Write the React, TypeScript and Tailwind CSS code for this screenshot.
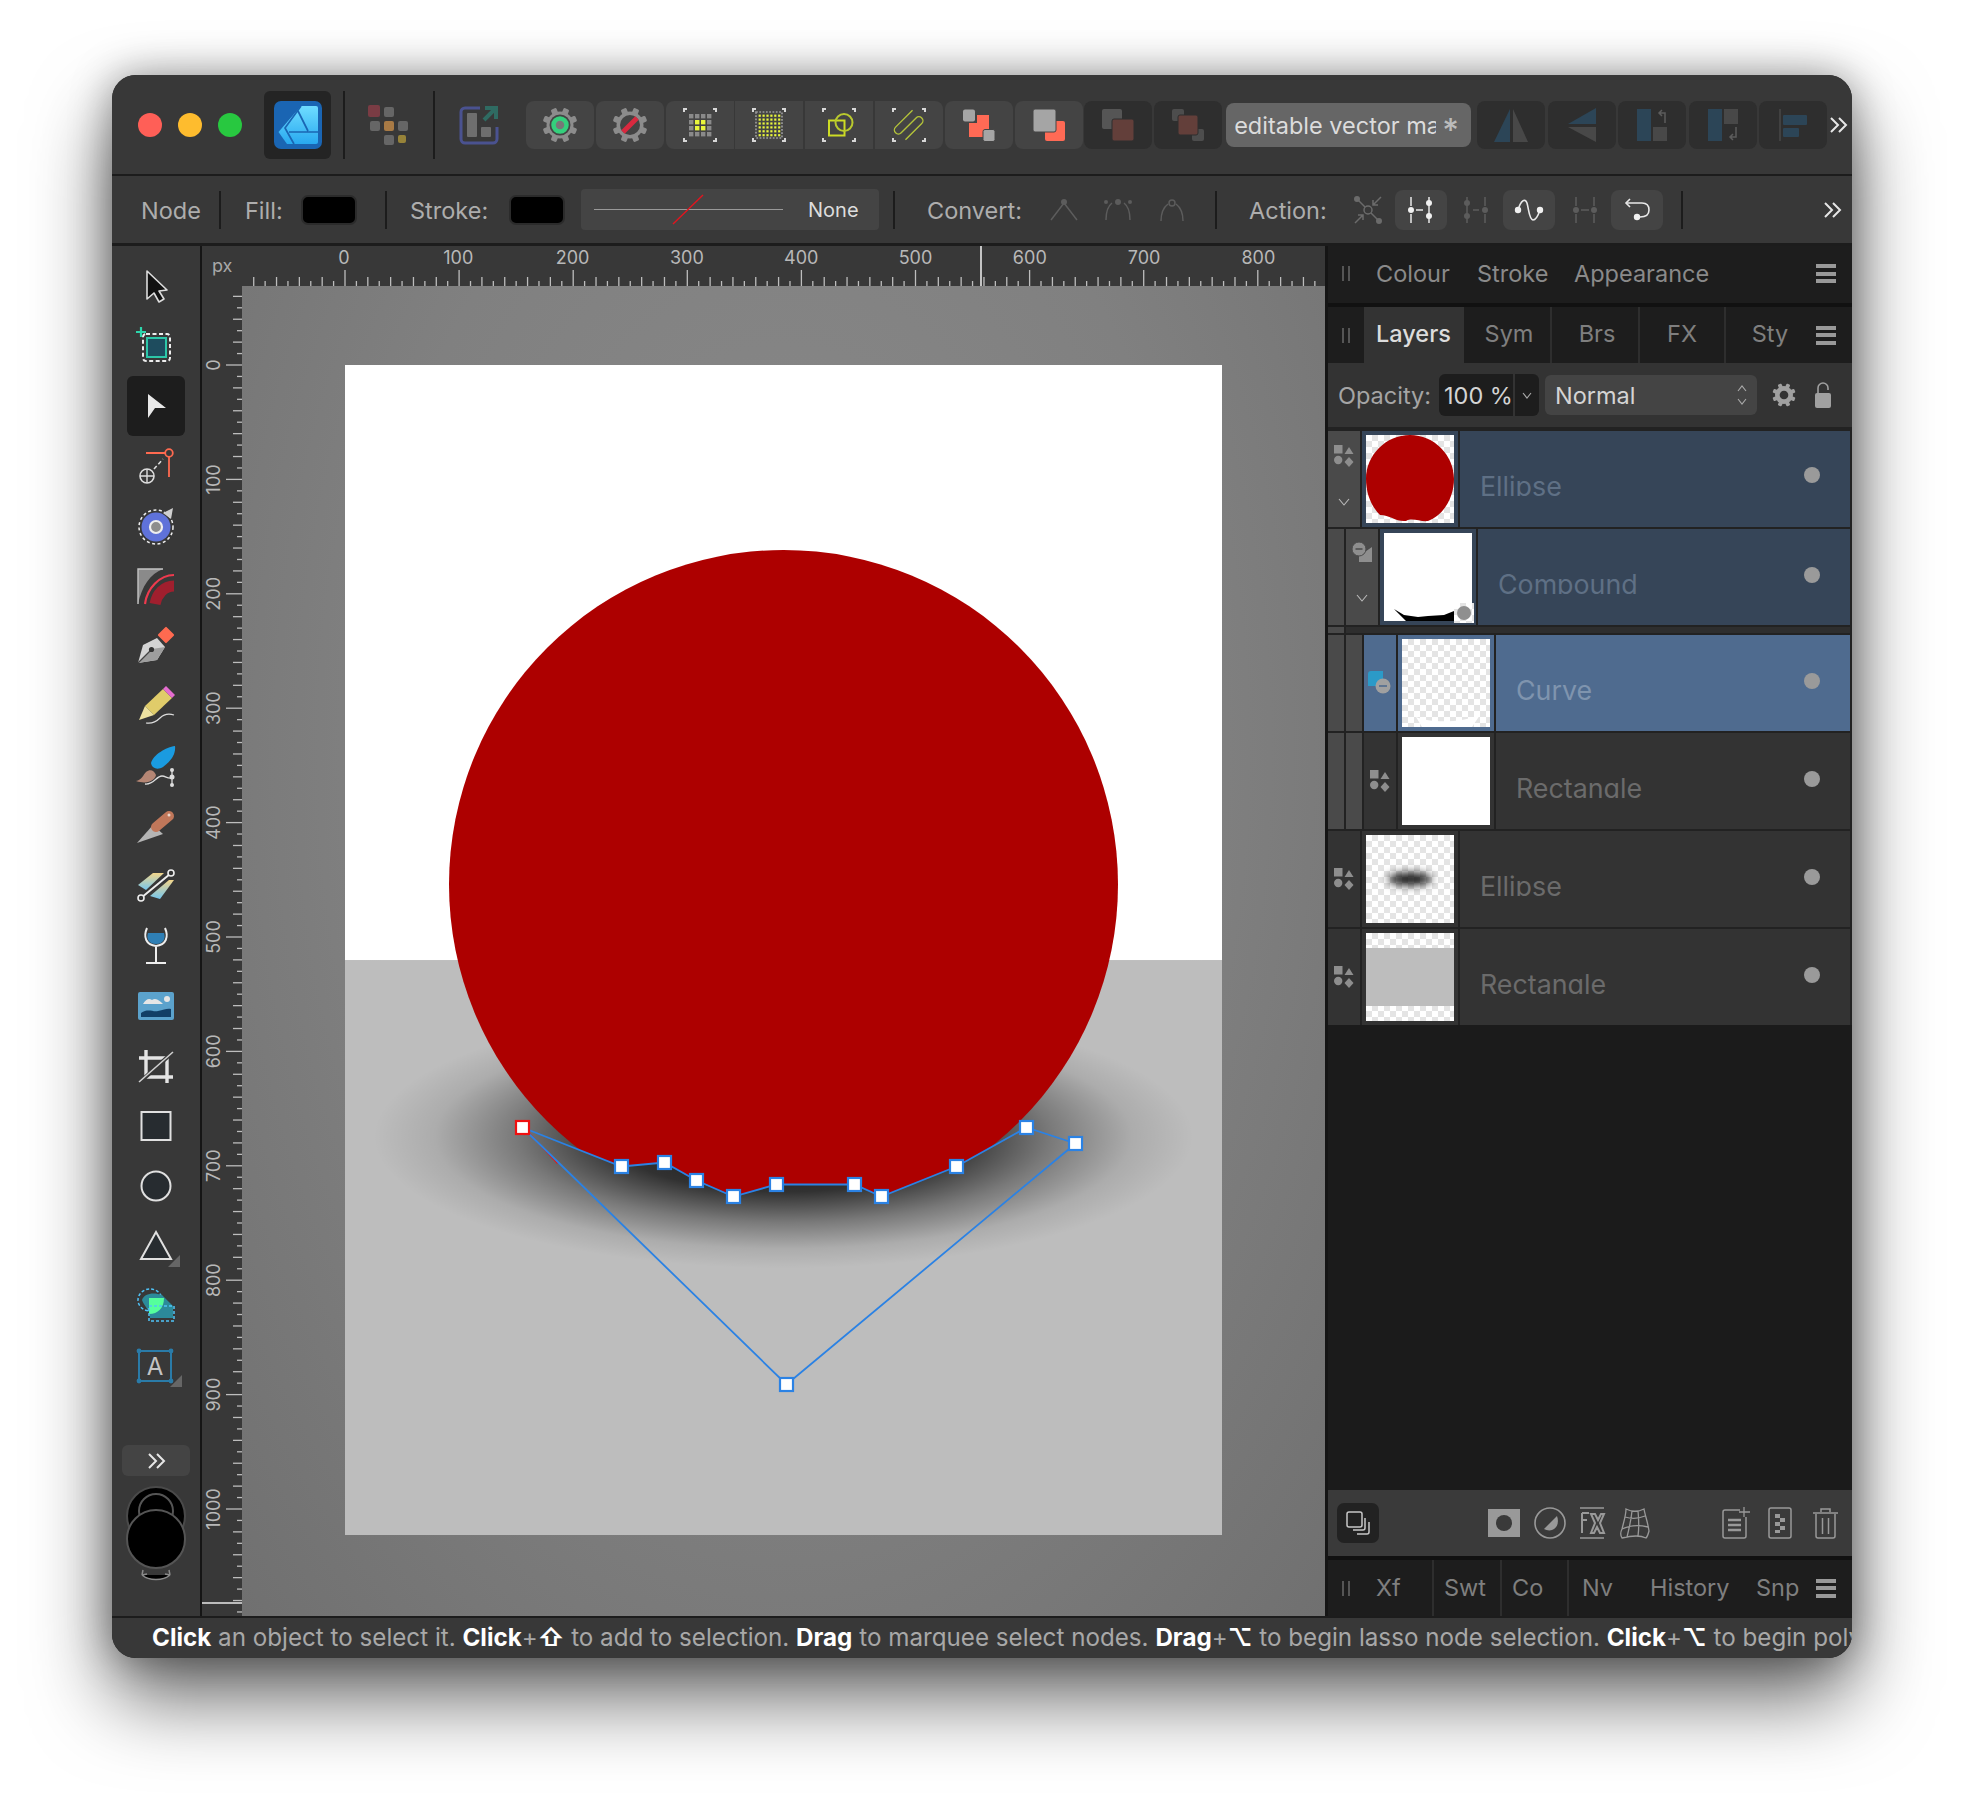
import type { ReactNode } from "react"

const RULER_STEP = 114.1 / 10

function Ico({ w, h, children, className = "" }: { w: number; h: number; children: ReactNode; className?: string }) {
  return (
    <svg width={w} height={h} viewBox={`0 0 ${w} ${h}`} fill="none" className={`shrink-0 overflow-visible ${className}`}>
      {children}
    </svg>
  )
}

function Sep({ className = "" }: { className?: string }) {
  return <div className={`w-[2px] shrink-0 bg-[#1c1c1c] ${className}`} />
}

function Chevrons() {
  return (
    <Ico w={17} h={16}>
      <path d="M1 1L8 8L1 15M9 1L16 8L9 15" stroke="#e6e6e6" strokeWidth="2" />
    </Ico>
  )
}

function Hamburger() {
  return (
    <div className="flex w-[20px] flex-col gap-[3.5px]">
      <div className="h-[4px] bg-[#999]" />
      <div className="h-[4px] bg-[#999]" />
      <div className="h-[4px] bg-[#999]" />
    </div>
  )
}

function Grip() {
  return (
    <div className="flex h-[15px] w-[8px] justify-between">
      <div className="w-[2px] bg-[#555]" />
      <div className="w-[2px] bg-[#555]" />
    </div>
  )
}

function Gear({ inner, size = 36, body = "#8c8c8c" }: { inner?: ReactNode; size?: number; body?: string }) {
  return (
    <svg width={size} height={size} viewBox="-18 -18 36 36" className="shrink-0">
      {[0, 45, 90, 135, 180, 225, 270, 315].map((a) => (
        <rect key={a} x={-3} y={-17.5} width={6} height={7} rx={1.5} fill={body} transform={`rotate(${a + 22.5})`} />
      ))}
      <circle r={13.5} fill={body} />
      {inner}
    </svg>
  )
}

function Brackets() {
  return (
    <g stroke="#d8d8d8" strokeWidth="2">
      <path d="M2 5V2H5M31 2H34V5M34 31V34H31M5 34H2V31" />
    </g>
  )
}

function SnapGridA() {
  const cells = [0, 1, 2, 3]
  return (
    <Ico w={36} h={36}>
      <Brackets />
      {cells.map((r) =>
        cells.map((c) => (
          <rect
            key={`${r}${c}`}
            x={7 + c * 6}
            y={7 + r * 6}
            width={4.4}
            height={4.4}
            fill={(r === 1 || r === 2) && (c === 1 || c === 2) ? "#e8f53c" : "#8a8a8a"}
          />
        )),
      )}
    </Ico>
  )
}

function SnapGridB() {
  const cells = [0, 1, 2, 3, 4, 5]
  return (
    <Ico w={36} h={36}>
      <Brackets />
      <rect x="5" y="5" width="26" height="26" stroke="#9a9a9a" strokeWidth="1.7" strokeDasharray="1.8 1.5" />
      {cells.map((r) =>
        cells.map((c) => <rect key={`${r}${c}`} x={7.6 + c * 3.9} y={7.6 + r * 3.9} width={2.2} height={2.2} fill="#e8f53c" />),
      )}
    </Ico>
  )
}

function AppIcon() {
  return (
    <Ico w={48} h={48}>
      <defs>
        <linearGradient id="appBlue" x1="0" y1="0" x2="0" y2="1">
          <stop offset="0" stopColor="#6fdcff" />
          <stop offset="1" stopColor="#28a9f0" />
        </linearGradient>
      </defs>
      <rect width="48" height="48" rx="7" fill="#1a65b3" />
      <path d="M27 5H42a2 2 0 0 1 2 2V41a2 2 0 0 1-2 2H13L4.5 31Z" fill="url(#appBlue)" />
      <path d="M27 5L11 27L20 43M24 10L34 30M15 31H44" stroke="#1a65b3" strokeWidth="1.7" />
    </Ico>
  )
}

function ToolbarButton({ children, className = "" }: { children?: ReactNode; className?: string }) {
  return <div className={`flex h-[48px] w-[68px] shrink-0 items-center justify-center ${className}`}>{children}</div>
}

function ColorGrid() {
  return (
    <Ico w={40} h={40}>
      <rect width="12" height="12" rx="2" fill="#7a3c44" />
      <rect x="16" y="2" width="10" height="10" rx="2" fill="#666" />
      <rect x="2" y="16" width="10" height="10" rx="2" fill="#666" />
      <rect x="16" y="16" width="10" height="10" rx="2" fill="#a87a45" />
      <rect x="30" y="16" width="10" height="10" rx="2" fill="#666" />
      <rect x="16" y="30" width="10" height="10" rx="2" fill="#666" />
      <rect x="30" y="30" width="8" height="8" rx="2" fill="#978339" />
    </Ico>
  )
}

function ExportIcon() {
  return (
    <Ico w={40} h={40}>
      <path d="M21 3H6a4 4 0 0 0-4 4V34a4 4 0 0 0 4 4H34a4 4 0 0 0 4-4V22" stroke="#4a5290" strokeWidth="3" />
      <rect x="8" y="8" width="10" height="24" rx="1" fill="#6e6e6e" />
      <rect x="22" y="22" width="10" height="10" rx="1" fill="#6e6e6e" />
      <path d="M25 15L36 4M26 3H37V14" stroke="#2f6b62" strokeWidth="4" />
    </Ico>
  )
}

function TitleBar() {
  return (
    <div className="flex h-[99px] shrink-0 items-center bg-[#383838] pl-[26px]">
      <div className="flex gap-[16px]">
        <div className="h-[24px] w-[24px] rounded-full bg-[#ff5f57]" />
        <div className="h-[24px] w-[24px] rounded-full bg-[#febc2e]" />
        <div className="h-[24px] w-[24px] rounded-full bg-[#28c840]" />
      </div>
      <div className="ml-[22px] flex h-[68px] w-[67px] items-center justify-center rounded-[6px] bg-[#242424]">
        <AppIcon />
      </div>
      <Sep className="ml-[12px] h-[68px]" />
      <div className="ml-[23px]"><ColorGrid /></div>
      <Sep className="ml-[25px] h-[68px]" />
      <div className="ml-[24px]"><ExportIcon /></div>
      <div className="ml-[27px] flex gap-[1.8px]">
        <ToolbarButton className="rounded-[8px] bg-[#444]">
          <Gear
            inner={
              <>
                <circle r={10.5} fill="#444" />
                <circle r={6.5} fill="#777" stroke="#34cf7c" strokeWidth="4.5" />
              </>
            }
          />
        </ToolbarButton>
        <ToolbarButton className="rounded-[8px] bg-[#444]">
          <Gear
            inner={
              <>
                <circle r={10} fill="#444" />
                <path d="M-7 7L7 -7" stroke="#d9293f" strokeWidth="5" />
              </>
            }
          />
        </ToolbarButton>
        <ToolbarButton className="rounded-l-[8px] bg-[#444]"><SnapGridA /></ToolbarButton>
        <ToolbarButton className="bg-[#444]"><SnapGridB /></ToolbarButton>
        <ToolbarButton className="bg-[#444]">
          <Ico w={36} h={36}>
            <Brackets />
            <rect x="8" y="13.5" width="15.5" height="15" stroke="#cddc24" strokeWidth="2" />
            <circle cx="23" cy="15.5" r="8.5" stroke="#b9c92e" strokeWidth="2" />
          </Ico>
        </ToolbarButton>
        <ToolbarButton className="rounded-r-[8px] bg-[#444]">
          <Ico w={36} h={36}>
            <Brackets />
            <path
              d="M29 -2H5a4 4 0 0 0 0 8H26a4 4 0 0 1 0 8H3"
              transform="translate(18 18) rotate(-45) translate(-16 -6)"
              stroke="#b3c23a"
              strokeWidth="1.4"
            />
          </Ico>
        </ToolbarButton>
        <ToolbarButton className="rounded-[8px] bg-[#444]">
          <Ico w={36} h={36}>
            <rect x="2" y="2.5" width="12" height="12" rx="2" fill="#a5a5a5" />
            <path d="M16 8H28V22H24V30H8V16H16Z" fill="#ff6a55" />
            <rect x="22" y="22.5" width="12" height="12" rx="2" fill="#a5a5a5" stroke="#444" />
          </Ico>
        </ToolbarButton>
        <ToolbarButton className="rounded-[8px] bg-[#444]">
          <Ico w={36} h={36}>
            <rect x="14" y="14" width="20" height="20" rx="2" fill="#ff6a55" />
            <rect x="2" y="2" width="23" height="23" rx="2" fill="#a5a5a5" stroke="#444" />
          </Ico>
        </ToolbarButton>
        <ToolbarButton className="rounded-[8px] bg-[#2e2e2e]">
          <Ico w={36} h={36}>
            <rect x="2" y="2" width="20" height="20" rx="2" fill="#555" />
            <rect x="12" y="12" width="22" height="22" rx="2" fill="#633f3a" stroke="#2e2e2e" />
          </Ico>
        </ToolbarButton>
        <ToolbarButton className="rounded-[8px] bg-[#2e2e2e]">
          <Ico w={36} h={36}>
            <rect x="2" y="2" width="12" height="12" rx="2" fill="#4d4d4d" />
            <rect x="22" y="22" width="12" height="12" rx="2" fill="#4d4d4d" />
            <rect x="8" y="8" width="20" height="20" rx="2" fill="#633f3a" stroke="#2e2e2e" />
          </Ico>
        </ToolbarButton>
      </div>
      <div className="ml-[4px] flex h-[44px] w-[245px] shrink-0 items-center rounded-[8px] bg-[#666] pl-[8px] pt-[3px] text-[23.5px] text-[#dcdcdc]">
        <div className="w-[202px] overflow-hidden whitespace-nowrap">editable vector material</div>
        <span className="ml-[6px] pt-[9px] text-[32px] font-medium leading-[24px] text-[#bbb]">*</span>
      </div>
      <div className="ml-[6px] flex gap-[2.5px]">
        <ToolbarButton className="w-[67px] rounded-[8px] bg-[#2e2e2e]">
          <Ico w={36} h={36}>
            <path d="M17 2V35H1Z" fill="#2c4557" />
            <path d="M20 2L35 35H20Z" fill="#484848" />
          </Ico>
        </ToolbarButton>
        <ToolbarButton className="w-[67px] rounded-[8px] bg-[#2e2e2e]">
          <Ico w={36} h={36}>
            <path d="M32 1V17H4Z" fill="#2c4557" />
            <path d="M4 20H32V35Z" fill="#484848" />
          </Ico>
        </ToolbarButton>
        <ToolbarButton className="w-[67px] rounded-[8px] bg-[#2e2e2e]">
          <Ico w={36} h={36}>
            <rect x="3" y="2" width="14" height="32" fill="#2c4557" />
            <rect x="19" y="20" width="14" height="14" fill="#484848" />
            <path d="M31 16V6H25M28 3L25 6L28 9" stroke="#5c5c5c" strokeWidth="1.5" />
          </Ico>
        </ToolbarButton>
        <ToolbarButton className="w-[67px] rounded-[8px] bg-[#2e2e2e]">
          <Ico w={36} h={36}>
            <rect x="3" y="2" width="14" height="32" fill="#2c4557" />
            <rect x="19" y="2" width="14" height="15" fill="#484848" />
            <path d="M31 20V30H25M28 27L25 30L28 33" stroke="#5c5c5c" strokeWidth="1.5" />
          </Ico>
        </ToolbarButton>
        <ToolbarButton className="w-[66px] rounded-[8px] bg-[#2e2e2e]">
          <Ico w={36} h={36}>
            <path d="M5 2V34" stroke="#484848" strokeWidth="1.5" />
            <rect x="8" y="8" width="24" height="10" rx="1" fill="#2c4557" />
            <rect x="8" y="21" width="16" height="9" rx="1" fill="#2c4557" />
          </Ico>
        </ToolbarButton>
      </div>
      <div className="ml-[3px]"><Chevrons /></div>
    </div>
  )
}

function Swatch() {
  return <div className="h-[30px] w-[56px] shrink-0 rounded-[7px] border-2 border-[#2b2b2b] bg-black" />
}

function ActionButton({ children }: { children: ReactNode }) {
  return <div className="flex h-[40px] w-[52px] shrink-0 items-center justify-center rounded-[8px] bg-[#444]">{children}</div>
}

function NodeSplit({ stroke, fill }: { stroke: string; fill: string }) {
  return (
    <Ico w={26} h={28}>
      <path d="M3 1V10M3 18V27M21 1V27M8 14H15" stroke={stroke} strokeWidth="1.5" />
      <circle cx="3" cy="14" r="3" fill={fill} />
      <circle cx="21" cy="7" r="3" fill={fill} />
      <circle cx="21" cy="20" r="3" fill={fill} />
    </Ico>
  )
}

function ContextBar() {
  return (
    <div className="flex h-[67px] shrink-0 items-center bg-[#383838] pl-[29px] text-[23.5px] text-[#adadad]">
      <span className="w-[78px] shrink-0 pt-[2px]">Node</span>
      <Sep className="h-[38px]" />
      <span className="ml-[24px] w-[56px] shrink-0 pt-[2px]">Fill:</span>
      <Swatch />
      <Sep className="ml-[28px] h-[38px]" />
      <span className="ml-[23px] w-[99px] shrink-0 pt-[2px]">Stroke:</span>
      <Swatch />
      <div className="ml-[16px] flex h-[41px] w-[298px] shrink-0 items-center rounded-[4px] bg-[#444]">
        <Ico w={227} h={41}>
          <path d="M13 20.5H202" stroke="#999" strokeWidth="1.2" />
          <path d="M92 35L122 6" stroke="#e2141e" strokeWidth="1.4" />
        </Ico>
        <span className="text-[20px] text-[#ddd]">None</span>
      </div>
      <Sep className="ml-[14px] h-[38px]" />
      <span className="ml-[32px] w-[123px] shrink-0 pt-[2px]">Convert:</span>
      <Ico w={28} h={24}>
        <path d="M1 22L14 5L27 22" stroke="#5c5c5c" strokeWidth="1.5" />
        <circle cx="14" cy="4" r="3" fill="#5c5c5c" />
      </Ico>
      <Ico w={30} h={24} className="ml-[25px]">
        <path d="M3 22C3 14 5 8 9 5M27 22C27 14 25 8 21 5" stroke="#5c5c5c" strokeWidth="1.5" />
        <circle cx="15" cy="4" r="3" fill="#5c5c5c" />
        <circle cx="3" cy="4" r="2" fill="#5c5c5c" />
        <circle cx="27" cy="4" r="2" fill="#5c5c5c" />
      </Ico>
      <Ico w={24} h={24} className="ml-[27px]">
        <path d="M1 23C1 15 4 9 8 6M23 23C23 15 20 9 16 6" stroke="#5c5c5c" strokeWidth="1.5" />
        <circle cx="12" cy="5" r="3" stroke="#5c5c5c" strokeWidth="1.5" />
      </Ico>
      <Sep className="ml-[31px] h-[38px]" />
      <span className="ml-[32px] w-[105px] shrink-0 pt-[2px]">Action:</span>
      <Ico w={28} h={30}>
        <circle cx="14" cy="15" r="4" stroke="#6b6b6b" strokeWidth="1.5" />
        <path d="M3 4L11 12M25 26L17 18" stroke="#6b6b6b" strokeWidth="1.5" />
        <circle cx="3" cy="4" r="3" fill="#6b6b6b" />
        <circle cx="25" cy="26" r="3" fill="#6b6b6b" />
        <path d="M27 2L19 10M19 5V10H24M1 28L9 20M9 25V20H4" stroke="#6b6b6b" strokeWidth="1.5" />
      </Ico>
      <div className="ml-[13px]">
        <ActionButton><NodeSplit stroke="#e8e8e8" fill="#f0f0f0" /></ActionButton>
      </div>
      <div className="ml-[17px]">
        <Ico w={24} h={28}>
          <path d="M3 1V27M21 1V10M21 18V27M9 14H15" stroke="#5c5c5c" strokeWidth="1.5" />
          <circle cx="3" cy="7" r="3" fill="#5c5c5c" />
          <circle cx="3" cy="20" r="3" fill="#5c5c5c" />
          <circle cx="21" cy="14" r="3" fill="#5c5c5c" />
        </Ico>
      </div>
      <div className="ml-[15px]">
        <ActionButton>
          <Ico w={28} h={26}>
            <path d="M3 13C6 3 10 1 12 6C14 13 14 22 18 23C21 23 23 19 25 13" stroke="#e8e8e8" strokeWidth="1.6" />
            <circle cx="3" cy="13" r="3.2" fill="#f0f0f0" />
            <circle cx="25" cy="13" r="3.2" fill="#f0f0f0" />
          </Ico>
        </ActionButton>
      </div>
      <div className="ml-[18px]">
        <Ico w={24} h={28}>
          <path d="M3 1V10M3 18V27M21 1V10M21 18V27M8 14H16" stroke="#5c5c5c" strokeWidth="1.5" />
          <circle cx="3" cy="14" r="3" fill="#5c5c5c" />
          <circle cx="21" cy="14" r="3" fill="#5c5c5c" />
        </Ico>
      </div>
      <div className="ml-[14px]">
        <ActionButton>
          <Ico w={28} h={26}>
            <path d="M3 6H19C24 6 26 9 26 13C26 17 23 20 17 20" stroke="#e8e8e8" strokeWidth="1.6" />
            <path d="M7 2L3 6L7 10" stroke="#e8e8e8" strokeWidth="1.6" />
            <circle cx="14" cy="20" r="3.2" fill="#f0f0f0" />
          </Ico>
        </ActionButton>
      </div>
      <Sep className="ml-[18px] h-[38px]" />
      <div className="ml-auto mr-[11px]"><Chevrons /></div>
    </div>
  )
}

function TopRuler() {
  const ticks = Array.from({ length: 96 }, (_, i) => i - 8)
  return (
    <svg width={1083} height={40} className="block bg-[#383838]">
      {ticks.map((i) => {
        const x = 103 + i * RULER_STEP
        const len = i % 10 === 0 ? 16 : i % 2 === 0 ? 9 : 5
        return <line key={i} x1={x} x2={x} y1={40 - len} y2={40} stroke="#bdbdbd" strokeWidth="1.3" />
      })}
      {[0, 100, 200, 300, 400, 500, 600, 700, 800].map((v) => (
        <text key={v} x={102 + v * 1.143} y={18} textAnchor="middle" fontSize={18} fill="#b8b8b8">
          {v}
        </text>
      ))}
      <line x1={739} x2={739} y1={0} y2={40} stroke="#e8e8e8" strokeWidth="1.6" />
    </svg>
  )
}

function LeftRuler() {
  const ticks = Array.from({ length: 117 }, (_, i) => i)
  return (
    <svg width={40} height={1330} className="block bg-[#383838]">
      {ticks.map((i) => {
        const y = 79 + (i - 7) * 11.44
        if (y < 0) return null
        const n = i - 7
        const len = n % 10 === 0 ? 16 : n % 2 === 0 ? 9 : 5
        return <line key={i} x1={40 - len} x2={40} y1={y} y2={y} stroke="#bdbdbd" strokeWidth="1.3" />
      })}
      {[0, 100, 200, 300, 400, 500, 600, 700, 800, 900, 1000].map((v) => (
        <text
          key={v}
          x={0}
          y={0}
          transform={`translate(18 ${79 + v * 1.144}) rotate(-90)`}
          textAnchor="middle"
          fontSize={18}
          fill="#b8b8b8"
        >
          {v}
        </text>
      ))}
      <line x1={0} x2={40} y1={1317} y2={1317} stroke="#e8e8e8" strokeWidth="1.6" />
    </svg>
  )
}

const CURVE: [number, number][] = [
  [522, 1127],
  [621, 1166],
  [664, 1162],
  [696, 1180],
  [733, 1196],
  [776, 1184],
  [854, 1184],
  [881, 1196],
  [956, 1166],
  [1026, 1127],
  [1075, 1143],
  [786, 1384],
]

function Artwork() {
  const points = CURVE.map((p) => p.join(",")).join(" ")
  return (
    <svg width={877} height={1170} viewBox="344.5 364.5 877 1170" className="block">
      <defs>
        <radialGradient id="groundShadow">
          <stop offset="0" stopColor="#000" stopOpacity="0.92" />
          <stop offset="0.42" stopColor="#000" stopOpacity="0.74" />
          <stop offset="0.65" stopColor="#000" stopOpacity="0.36" />
          <stop offset="0.85" stopColor="#000" stopOpacity="0.09" />
          <stop offset="1" stopColor="#000" stopOpacity="0" />
        </radialGradient>
        <mask id="curveMask" maskUnits="userSpaceOnUse" x="344" y="364" width="878" height="1171">
          <rect x="344" y="364" width="878" height="1171" fill="#fff" />
          <polygon points={points} fill="#000" />
        </mask>
        <clipPath id="floorClip">
          <rect x="344" y="960" width="878" height="575" />
        </clipPath>
      </defs>
      <rect x="344" y="364" width="878" height="596" fill="#fff" />
      <rect x="344" y="960" width="878" height="575" fill="#bdbdbd" />
      <g clipPath="url(#floorClip)">
        <ellipse cx="783" cy="1136" rx="410" ry="132" fill="url(#groundShadow)" />
      </g>
      <circle cx="783" cy="884" r="334.5" fill="#ad0000" mask="url(#curveMask)" />
      <path d="M529 1133L557 1163" stroke="#f01010" strokeWidth="1.2" />
      <polygon points={points} fill="none" stroke="#2b82e4" strokeWidth="1.8" />
      {CURVE.map(([x, y], i) => (
        <rect
          key={i}
          x={x - 6.5}
          y={y - 6.5}
          width={13}
          height={13}
          fill="#fff"
          stroke={i === 0 ? "#f01010" : "#2b82e4"}
          strokeWidth="2.2"
        />
      ))}
    </svg>
  )
}

function Canvas() {
  return (
    <div className="grid min-w-0 flex-1 grid-cols-[40px_1fr] grid-rows-[40px_1fr]">
      <div className="bg-[#383838] pl-[10px] pt-[10px] text-[18px] leading-[20px] text-[#a8a8a8]">px</div>
      <div className="overflow-hidden"><TopRuler /></div>
      <div className="overflow-hidden"><LeftRuler /></div>
      <div className="overflow-hidden bg-[radial-gradient(ellipse_at_50%_35%,#8a8a8a_0%,#808080_55%,#707070_100%)] pl-[102.5px] pt-[78.5px]">
        <Artwork />
      </div>
    </div>
  )
}

function ToolIcons() {
  return [
    <Ico key="move" w={40} h={40}>
      <path d="M11 5L31 24L23 25L28 33L23 36L18 27L11 33Z" fill="#111" stroke="#ddd" strokeWidth="1.6" strokeLinejoin="round" />
    </Ico>,
    <Ico key="artboard" w={40} h={40}>
      <rect x="7" y="8" width="27" height="27" rx="3" stroke="#eee" strokeWidth="2" strokeDasharray="4 2.5" />
      <rect x="11" y="12" width="19" height="19" fill="#1e4c5e" stroke="#2cc7a8" strokeWidth="2" />
      <path d="M0 6H10M5 1V11" stroke="#2cd6ac" strokeWidth="2.2" />
    </Ico>,
    <Ico key="node" w={40} h={40}>
      <path d="M12 8L30 22H19L12 32Z" fill="#e8e8e8" />
    </Ico>,
    <Ico key="point" w={40} h={40}>
      <path d="M10 7H29M33 11V31" stroke="#ff6a50" strokeWidth="1.8" />
      <circle cx="33" cy="7" r="3.8" stroke="#ff6a50" strokeWidth="1.8" />
      <path d="M18 23L27 13" stroke="#ddd" strokeWidth="1.6" strokeDasharray="4 2.5" />
      <circle cx="11" cy="30" r="7" stroke="#ddd" strokeWidth="1.6" />
      <path d="M4 30H18M11 23V37" stroke="#ddd" strokeWidth="1.4" />
    </Ico>,
    <Ico key="contour" w={40} h={40}>
      <circle cx="20" cy="21" r="17" stroke="#eee" strokeWidth="1.5" strokeDasharray="3 2.5" />
      <circle cx="20" cy="21" r="14.5" fill="#5f72d9" />
      <circle cx="20" cy="21" r="6" fill="#8d8d8d" stroke="#eee" strokeWidth="2.2" />
      <path d="M27 7L37 2L35 13Z" fill="#cfcfcf" />
    </Ico>,
    <Ico key="corner" w={40} h={40}>
      <path d="M2 3H27C14 8 6 20 2 38Z" fill="#8a8a8a" />
      <path d="M2 38V3H27" stroke="#c4c4c4" strokeWidth="1.4" />
      <path d="M38 20C28 20 21 28 19 38" stroke="#a01f2e" strokeWidth="11" />
      <path d="M38 9C24 9 11 22 9 38" stroke="#ee3a4e" strokeWidth="2.2" />
    </Ico>,
    <Ico key="pen" w={40} h={40}>
      <path d="M2 37L7 19L21 12L29 21L21 34Z" fill="#d4d4d4" />
      <path d="M2 37L21 34L29 21L16 23Z" fill="#9e9e9e" />
      <path d="M2 37L15 24" stroke="#444" strokeWidth="1.2" />
      <circle cx="15.5" cy="23.5" r="2.6" fill="#333" />
      <rect x="24" y="3" width="12" height="12" rx="1" transform="rotate(45 30 9)" fill="#ff6a50" />
    </Ico>,
    <Ico key="pencil" w={40} h={40}>
      <path d="M9 20L27 3L36 12L18 29Z" fill="#e0cc6a" />
      <path d="M9 20L18 29L3 34Z" fill="#eee2a0" />
      <path d="M27 3L30 0L39 9L36 12Z" fill="#e46cd0" />
      <path d="M10 37C16 38 20 36 24 32C28 28 32 27 38 29" stroke="#ddd" strokeWidth="1.2" />
    </Ico>,
    <Ico key="brush" w={40} h={40}>
      <path d="M39 0C30 1 17 9 15 17C16 23 22 24 27 21C35 15 40 8 39 0Z" fill="#1a9be0" />
      <path d="M0 35C6 34 7 29 10 26C14 23 18 24 20 29C19 34 12 39 0 35Z" fill="#b58674" />
      <path d="M9 38C18 39 20 30 26 30C30 30 31 33 36 32M36 23V40" stroke="#ddd" strokeWidth="1.3" />
      <circle cx="36" cy="24" r="2" fill="#ddd" />
      <circle cx="36" cy="31" r="2.5" fill="#ddd" />
      <circle cx="36" cy="39" r="2" fill="#ddd" />
    </Ico>,
    <Ico key="knife" w={40} h={40}>
      <path d="M1 37L17 19L27 28Z" fill="#b4b4b4" />
      <path d="M20 21L33 10" stroke="#c0775a" strokeWidth="10" strokeLinecap="round" />
      <circle cx="33" cy="9" r="1.5" fill="#ecd7cc" />
    </Ico>,
    <Ico key="fill" w={40} h={40}>
      <defs>
        <linearGradient id="fillTool" x1="0" y1="0" x2="0" y2="1">
          <stop offset="0" stopColor="#f3d58a" />
          <stop offset="1" stopColor="#74c6ee" />
        </linearGradient>
      </defs>
      <path d="M2 19L17 7H28L10 24Z" fill="url(#fillTool)" />
      <path d="M14 30L33 14H38L24 33Z" fill="url(#fillTool)" />
      <path d="M5 32L34 8" stroke="#333" strokeWidth="4" />
      <path d="M5 32L34 8" stroke="#eee" strokeWidth="2" />
      <circle cx="5" cy="32" r="3" fill="#333" stroke="#eee" strokeWidth="1.6" />
      <circle cx="35" cy="7" r="3" fill="#333" stroke="#eee" strokeWidth="1.6" />
    </Ico>,
    <Ico key="glass" w={40} h={40}>
      <path d="M12 7H28C30 13 27 18 20 18C13 18 10 13 12 7Z" fill="#2f7fb5" />
      <path d="M11 2C7 11 10 19 20 20C30 19 33 11 29 2M20 20V36M10 37H30" stroke="#eee" strokeWidth="2" />
    </Ico>,
    <Ico key="image" w={40} h={40}>
      <rect x="2" y="6" width="36" height="28" rx="2" fill="#5ba2cc" />
      <path d="M5 27C12 22 16 26 22 25C28 24 31 22 35 23V31H5Z" fill="#123f66" />
      <path d="M7 18C10 13 13 12 16 14C20 11 24 15 27 18Z" fill="#e6e6e6" />
      <circle cx="31" cy="13" r="3" fill="#e6e6e6" />
    </Ico>,
    <Ico key="crop" w={40} h={40}>
      <path d="M10 4V31H37M3 12H31V37" stroke="#e4e4e4" strokeWidth="3.4" />
      <path d="M2 38L38 5" stroke="#383838" strokeWidth="4" />
      <path d="M3 36L37 6" stroke="#cfcfcf" strokeWidth="1.6" />
    </Ico>,
    <Ico key="rect" w={40} h={40}>
      <rect x="5.5" y="6" width="29" height="28" fill="#272c30" stroke="#e0e0e0" strokeWidth="2" />
    </Ico>,
    <Ico key="ellipse" w={40} h={40}>
      <circle cx="20" cy="20" r="14.5" fill="#272c30" stroke="#e0e0e0" strokeWidth="2" />
    </Ico>,
    <Ico key="triangle" w={40} h={40}>
      <path d="M20 6L35 33H5Z" fill="#272c30" stroke="#e0e0e0" strokeWidth="2" />
      <path d="M44 29V41H32Z" fill="#666" />
    </Ico>,
    <Ico key="flood" w={40} h={40}>
      <ellipse cx="14" cy="14" rx="12" ry="11" stroke="#4fc3f7" strokeWidth="1.5" strokeDasharray="3 2" />
      <path d="M6 14C8 7 18 6 26 9L37 20V32H14C14 24 8 20 6 14Z" fill="#2c8a9a" />
      <path d="M13 12H28C28 22 22 28 13 28Z" fill="#55ff9c" />
      <rect x="13" y="20" width="25" height="15" stroke="#4fc3f7" strokeWidth="1.5" strokeDasharray="3 2" />
    </Ico>,
    <Ico key="frame" w={40} h={40}>
      <rect x="3" y="5" width="32" height="30" stroke="#2a7ba8" strokeWidth="2" />
      <circle cx="3" cy="5" r="2.4" fill="#2a7ba8" />
      <circle cx="35" cy="5" r="2.4" fill="#2a7ba8" />
      <circle cx="3" cy="35" r="2.4" fill="#2a7ba8" />
      <circle cx="35" cy="35" r="2.4" fill="#2a7ba8" />
      <text x="19" y="29" textAnchor="middle" fontSize="24" fill="#c4c4c4">A</text>
      <path d="M46 29V41H34Z" fill="#666" />
    </Ico>,
  ]
}

function ToolRail() {
  return (
    <div className="flex w-[88px] shrink-0 flex-col items-center bg-[#383838] pt-[10px]">
      {ToolIcons().map((icon, i) => (
        <div key={i} className={`flex h-[60px] w-[58px] items-center justify-center ${i === 2 ? "rounded-[6px] bg-[#1d1d1d]" : ""}`}>
          {icon}
        </div>
      ))}
      <div className="mt-[49px] flex h-[31px] w-[68px] items-center justify-center rounded-[6px] bg-[#444]">
        <Chevrons />
      </div>
      <svg width={64} height={96} viewBox="0 0 64 96" className="mt-[10px] block">
        <circle cx="32" cy="30" r="29" fill="#000" stroke="#4a4a4a" strokeWidth="2" />
        <circle cx="32" cy="25" r="17" fill="none" stroke="#555" strokeWidth="2" />
        <circle cx="32" cy="53" r="29" fill="#000" stroke="#555" strokeWidth="2" />
        <path d="M18 89C25 95 39 95 46 89M18 89L23 88M18 89L19 84M46 89L41 88M46 89L45 84" stroke="#8a8a8a" strokeWidth="1.5" />
      </svg>
    </div>
  )
}

function Shapes() {
  return (
    <Ico w={20} h={24}>
      <rect x="0" y="1" width="8.5" height="8.5" fill="#8e8e8e" />
      <path d="M15 3L19.5 10H10.5Z" fill="#8e8e8e" />
      <circle cx="4.2" cy="16" r="4.2" fill="#8e8e8e" />
      <path d="M15 13L19.5 18L15 23L10.5 18Z" fill="#8e8e8e" />
    </Ico>
  )
}

function LayerRow({
  depth,
  name,
  tone,
  iconTone,
  icon,
  thumb,
  expand,
  dotClass = "mt-[38px]",
}: {
  depth: number
  name: string
  tone: "parent" | "selected" | "plain"
  iconTone: string
  icon: ReactNode
  thumb: ReactNode
  expand?: boolean
  dotClass?: string
}) {
  const bg = tone === "parent" ? "bg-[#364558]" : tone === "selected" ? "bg-[#4f6b8f]" : "bg-[#333]"
  const text = tone === "parent" ? "text-[#5f7085]" : tone === "selected" ? "text-[#7f94ae]" : "text-[#6b6b6b]"
  return (
    <div className="flex h-[96px] shrink-0 gap-[2px]">
      {depth > 0 && <div className="w-[16px] bg-[#4a4a4a]" />}
      {depth > 1 && <div className="w-[16px] bg-[#4a4a4a]" />}
      <div className={`flex w-[32px] shrink-0 flex-col items-center ${expand ? "pt-[13px]" : "justify-center"} ${iconTone}`}>
        {icon}
        {expand && (
          <Ico w={12} h={8} className="mt-[30px]">
            <path d="M1 1L6 7L11 1" stroke="#bbb" strokeWidth="1.1" />
          </Ico>
        )}
      </div>
      <div className={`relative flex w-[96px] shrink-0 items-center justify-center ${bg}`}>{thumb}</div>
      <div className={`flex min-w-0 flex-1 justify-between pl-[20px] pr-[30px] ${bg}`}>
        <div className={`h-[65px] overflow-hidden pt-[39px] text-[26.8px] leading-[32px] ${text}`}>{name}</div>
        <div className={`h-[16px] w-[16px] rounded-full bg-[#9a9a9a] ${dotClass}`} />
      </div>
    </div>
  )
}

const CHECKER = "bg-white bg-[repeating-conic-gradient(#e4e4e4_0_25%,#fff_0_50%)] bg-[length:12px_12px]"

function Thumb({ children, checker = true }: { children?: ReactNode; checker?: boolean }) {
  return (
    <div className={`h-[88px] w-[88px] ${checker ? CHECKER : "bg-white"}`}>
      <svg width={88} height={88} viewBox="0 0 88 88" className="block">
        {children}
      </svg>
    </div>
  )
}

function LayersPanel() {
  return (
    <div className="flex w-[524px] shrink-0 flex-col bg-[#1b1b1b]">
      <div className="flex h-[57px] shrink-0 items-center bg-[#1d1d1d] pb-[2px] pl-[14px] text-[23.5px] text-[#8a8a8a]">
        <Grip />
        <span className="ml-[26px] w-[101px]">Colour</span>
        <span className="w-[97px]">Stroke</span>
        <span>Appearance</span>
        <div className="ml-auto mr-[16px]"><Hamburger /></div>
      </div>
      <div className="h-[4px] shrink-0 bg-[#111]" />
      <div className="flex h-[56px] shrink-0 items-stretch bg-[#1d1d1d] text-[23.5px] text-[#7f7f7f]">
        <div className="flex w-[36px] items-center pl-[14px]"><Grip /></div>
        <div className="flex w-[100px] items-center bg-[#333] pb-[2px] pl-[12px] font-medium text-[#dcdcdc]">Layers</div>
        <div className="flex w-[88px] items-center justify-center border-r-2 border-[#2e2e2e] pb-[2px] pl-[4px]">Sym</div>
        <div className="flex w-[88px] items-center justify-center border-r-2 border-[#2e2e2e] pb-[2px] pl-[4px]">Brs</div>
        <div className="flex w-[86px] items-center justify-center border-r-2 border-[#2e2e2e] pb-[2px]">FX</div>
        <div className="flex w-[84px] items-center justify-center pb-[2px] pl-[4px]">Sty</div>
        <div className="ml-auto mr-[16px] flex items-center"><Hamburger /></div>
      </div>
      <div className="flex h-[64px] shrink-0 items-center bg-[#333] pl-[10px] text-[23.5px] text-[#a5a5a5]">
        <span className="w-[101px] shrink-0 pt-[2px]">Opacity:</span>
        <div className="flex h-[42px] w-[74px] shrink-0 items-center overflow-hidden whitespace-nowrap rounded-l-[6px] bg-[#1d1d1d] pl-[5px] pt-[2px] text-[#d4d4d4]">
          100 %
        </div>
        <div className="ml-[2px] flex h-[42px] w-[24px] shrink-0 items-center justify-center rounded-r-[6px] bg-[#1d1d1d]">
          <Ico w={10} h={7}>
            <path d="M1 1L5 6L9 1" stroke="#aaa" strokeWidth="1.1" />
          </Ico>
        </div>
        <div className="ml-[6px] flex h-[40px] w-[212px] shrink-0 items-center justify-between rounded-[6px] bg-[#444] pl-[10px] pr-[10px] text-[#d4d4d4]">
          <span className="pt-[2px]">Normal</span>
          <Ico w={10} h={24}>
            <path d="M1 8L5 3L9 8M1 16L5 21L9 16" stroke="#aaa" strokeWidth="1.1" />
          </Ico>
        </div>
        <div className="ml-[15px]">
          <Gear size={24} body="#a0a0a0" inner={<circle r={6.5} fill="#333" />} />
        </div>
        <Ico w={16} h={26} className="ml-[19px]">
          <path d="M3 11V6a5 5 0 0 1 10 0V8" stroke="#a0a0a0" strokeWidth="1.6" />
          <rect y="11" width="16" height="15" rx="2" fill="#a0a0a0" />
        </Ico>
      </div>
      <div className="h-[4px] shrink-0 bg-[#222]" />
      <div className="flex flex-col gap-[2px] bg-[#222] pr-[2px]">
        <LayerRow
          depth={0}
          name="Ellipse"
          tone="parent"
          iconTone="bg-[#4a4a4a]"
          icon={<Shapes />}
          expand
          dotClass="mt-[36px]"
          thumb={
            <Thumb>
              <path
                d="M44 0C68 0 88 20 88 44C88 62 78 80 62 86C54 87 46 82 40 86C30 87 24 80 14 80C5 71 0 58 0 44C0 20 20 0 44 0Z"
                fill="#ad0000"
              />
            </Thumb>
          }
        />
        <LayerRow
          depth={1}
          name="Compound"
          tone="parent"
          iconTone="bg-[#4a4a4a]"
          expand
          icon={
            <Ico w={20} h={22}>
              <path d="M7 14L20 5V20H7Z" fill="#8e8e8e" />
              <circle cx="7" cy="7" r="7" fill="#8e8e8e" stroke="#4a4a4a" strokeWidth="1" />
              <path d="M3.5 7H10.5" stroke="#4a4a4a" strokeWidth="1.5" />
            </Ico>
          }
          thumb={
            <>
              <Thumb checker={false}>
                <path d="M10 76L20 82L34 84L44 83L60 82L70 78V88H22Z" fill="#000" />
              </Thumb>
              <div className={`absolute bottom-[2px] right-[2px] flex h-[20px] w-[20px] items-center justify-center ${CHECKER} bg-[length:6px_6px]`}>
                <div className="h-[14px] w-[14px] rounded-full bg-[#8f8f8f]" />
              </div>
            </>
          }
        />
        <div className="flex h-[6px] gap-[2px]">
          <div className="w-[16px] bg-[#4a4a4a]" />
          <div className="flex-1 bg-[#2e2e2e]" />
        </div>
        <LayerRow
          depth={2}
          name="Curve"
          tone="selected"
          iconTone="bg-[#4f6b8f]"
          icon={
            <Ico w={24} h={24}>
              <path d="M0 3a3 3 0 0 1 3-3H15V12L12 15H0Z" fill="#2b9ac8" />
              <circle cx="15" cy="15" r="7.5" fill="#a0a0a0" />
              <path d="M11 15H19" stroke="#4f6b8f" strokeWidth="1.6" />
            </Ico>
          }
          thumb={
            <Thumb>
              <path d="M14 78C28 84 60 84 78 76L70 88H20Z" fill="#fff" />
            </Thumb>
          }
        />
        <LayerRow depth={2} name="Rectangle" tone="plain" iconTone="bg-[#333]" icon={<Shapes />} thumb={<Thumb checker={false} />} />
        <LayerRow
          depth={0}
          name="Ellipse"
          tone="plain"
          iconTone="bg-[#333]"
          icon={<Shapes />}
          thumb={
            <Thumb>
              <defs>
                <filter id="thumbBlur" x="-30%" y="-100%" width="160%" height="300%">
                  <feGaussianBlur stdDeviation="4" />
                </filter>
              </defs>
              <ellipse cx="44" cy="44" rx="22" ry="6.5" fill="#000" fillOpacity="0.9" filter="url(#thumbBlur)" />
            </Thumb>
          }
        />
        <LayerRow
          depth={0}
          name="Rectangle"
          tone="plain"
          iconTone="bg-[#333]"
          icon={<Shapes />}
          thumb={
            <Thumb>
              <rect y="15" width="88" height="58" fill="#bdbdbd" />
            </Thumb>
          }
        />
      </div>
      <div className="flex-1" />
      <div className="flex h-[66px] shrink-0 items-center bg-[#3a3a3a] pl-[9px]">
        <div className="flex h-[40px] w-[42px] items-center justify-center rounded-[7px] bg-[#222]">
          <Ico w={24} h={24}>
            <rect x="1" y="1" width="15" height="15" rx="2" stroke="#c8c8c8" strokeWidth="1.5" />
            <path d="M19 7V17a2 2 0 0 1-2 2H7M23 11V21a2 2 0 0 1-2 2H11" stroke="#c8c8c8" strokeWidth="1.5" />
          </Ico>
        </div>
        <Ico w={32} h={28} className="ml-[109px]">
          <rect width="32" height="28" fill="#999" />
          <circle cx="16" cy="14" r="8" fill="#3a3a3a" />
        </Ico>
        <Ico w={32} h={32} className="ml-[14px]">
          <circle cx="16" cy="16" r="15" stroke="#999" strokeWidth="1.6" />
          <path d="M10 22L23 9C25 14 24 21 18 23C15 24 12 23 10 22Z" fill="#999" />
        </Ico>
        <Ico w={24} h={32} className="ml-[14px]">
          <path d="M0 1H24M0 31H24" stroke="#999" strokeWidth="1.6" />
          <path d="M2 6H9M2 6V26M2 13H7M11 7H15L18 13L21 7H24L20 16L24 26H20L17 20L14 26H11L15 16Z" stroke="#999" strokeWidth="2" />
        </Ico>
        <Ico w={30} h={32} className="ml-[16px]">
          <path
            d="M6 2C12 5 18 5 24 2C25 8 28 16 29 24C28 28 27 30 26 31C20 28 10 29 2 31C0 28 0 26 2 22C4 14 6 8 6 2ZM12 4C11 14 9 22 7 30M18 4C19 14 19 22 18 29M25 9C18 12 11 12 5 10M28 20C20 18 10 18 2 22"
            stroke="#999"
            strokeWidth="1.3"
          />
        </Ico>
        <Ico w={28} h={32} className="ml-[72px]">
          <path d="M18 3H3a2 2 0 0 0-2 2V29a2 2 0 0 0 2 2H22a2 2 0 0 0 2-2V10" stroke="#999" strokeWidth="1.5" />
          <path d="M22 0V10M17 5H28" stroke="#999" strokeWidth="1.3" />
          <path d="M6 13H19M6 18H19M6 23H19" stroke="#999" strokeWidth="2.4" />
        </Ico>
        <Ico w={24} h={32} className="ml-[18px]">
          <rect x="1" y="1" width="22" height="30" rx="2" stroke="#999" strokeWidth="1.5" />
          <path d="M7 7H12V11H7ZM12 11H17V15H12ZM7 15H12V19H7ZM12 19H17V23H12ZM7 23H12V26H7Z" fill="#999" />
        </Ico>
        <Ico w={25} h={32} className="ml-[21px]">
          <path d="M0 6H25M8 5V2H17V5" stroke="#999" strokeWidth="1.5" />
          <path d="M3 7V29a2 2 0 0 0 2 2H20a2 2 0 0 0 2-2V7M9.5 11V27M15.5 11V27" stroke="#999" strokeWidth="1.5" />
        </Ico>
      </div>
      <div className="h-[4px] shrink-0 bg-[#111]" />
      <div className="flex h-[56px] shrink-0 items-stretch bg-[#1d1d1d] text-[23.5px] text-[#7f7f7f]">
        <div className="flex w-[36px] items-center pl-[14px]"><Grip /></div>
        <div className="flex w-[70px] items-center border-r-2 border-[#2e2e2e] pl-[12px]">Xf</div>
        <div className="flex w-[68px] items-center border-r-2 border-[#2e2e2e] pl-[10px]">Swt</div>
        <div className="flex w-[67px] items-center border-r-2 border-[#2e2e2e] pl-[10px]">Co</div>
        <div className="flex w-[81px] items-center pl-[13px]">Nv</div>
        <div className="flex w-[106px] items-center">History</div>
        <div className="flex items-center">Snp</div>
        <div className="ml-auto mr-[16px] flex items-center"><Hamburger /></div>
      </div>
    </div>
  )
}

function StatusBar() {
  const b = "font-bold text-white"
  return (
    <div className="flex h-[40px] shrink-0 items-center overflow-hidden whitespace-nowrap bg-[#383838] pl-[40px] text-[24.2px] text-[#a8a8a8]">
      <span>
        <span className={b}>Click</span> an object to select it. <span className={b}>Click</span>+<span className={b}>⇧</span> to add to
        selection. <span className={b}>Drag</span> to marquee select nodes. <span className={b}>Drag</span>+<span className={b}>⌥</span> to
        begin lasso node selection. <span className={b}>Click</span>+<span className={b}>⌥</span> to begin polygon node selection.
      </span>
    </div>
  )
}

export default function App() {
  return (
    <div className="h-[1806px] w-[1964px] overflow-hidden bg-white pl-[112px] pt-[75px] font-['Inter','DejaVu_Sans',sans-serif]">
      <div className="flex h-[1583px] w-[1740px] flex-col overflow-hidden rounded-[24px] bg-[#1a1a1a] shadow-[0_40px_80px_rgba(0,0,0,0.6),0_0_40px_rgba(0,0,0,0.35)]">
        <TitleBar />
        <div className="h-[2px] shrink-0 bg-[#1c1c1c]" />
        <ContextBar />
        <div className="h-[3px] shrink-0 bg-[#1c1c1c]" />
        <div className="flex min-h-0 flex-1">
          <ToolRail />
          <div className="w-[2px] shrink-0 bg-[#151515]" />
          <Canvas />
          <div className="w-[3px] shrink-0 bg-[#151515]" />
          <LayersPanel />
        </div>
        <div className="h-[2px] shrink-0 bg-[#1c1c1c]" />
        <StatusBar />
      </div>
    </div>
  )
}
